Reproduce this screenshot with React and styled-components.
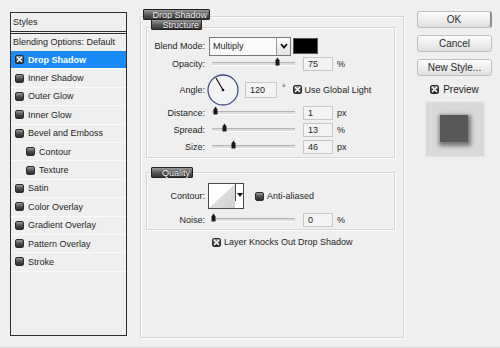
import React from 'react'
import styled, { createGlobalStyle } from 'styled-components'

const GlobalStyle = createGlobalStyle`
  html, body { margin: 0; padding: 0; background: #efefef; }
  body {
    font-family: "Liberation Sans", Arial, sans-serif;
    font-size: 9px;
    color: #1e1e1e;
  }
`

const styleItems = [
  { name: 'Drop Shadow', checked: true, active: true },
  { name: 'Inner Shadow' },
  { name: 'Outer Glow' },
  { name: 'Inner Glow' },
  { name: 'Bevel and Emboss' },
  { name: 'Contour', indent: true },
  { name: 'Texture', indent: true },
  { name: 'Satin' },
  { name: 'Color Overlay' },
  { name: 'Gradient Overlay' },
  { name: 'Pattern Overlay' },
  { name: 'Stroke' },
]

function Check({ checked }) {
  return (
    <CheckBox>
      {checked && (
        <svg width="7" height="7" viewBox="0 0 7 7">
          <path d="M1 1 L6 6 M6 1 L1 6" stroke="#fff" strokeWidth="1.4" />
        </svg>
      )}
    </CheckBox>
  )
}

function Slider({ pos }) {
  return (
    <Track>
      <Thumb style={{ left: pos }}>
        <svg width="5" height="9" viewBox="0 0 5 9">
          <path d="M0.5 3.5 L2.5 0.5 L4.5 3.5 V8.5 H0.5 Z" fill="#1a1a1a" />
        </svg>
      </Thumb>
    </Track>
  )
}

function SliderRow({ label, value, unit, pos, h = 14, top = 0 }) {
  return (
    <Row h={h} top={top}>
      <Label>{label}</Label>
      <Slider pos={pos} />
      <Field>{value}</Field>
      <Unit>{unit}</Unit>
    </Row>
  )
}

export default function App() {
  return (
    <>
      <GlobalStyle />
      <Dialog>
        <StylesPanel>
          <StylesHead>Styles</StylesHead>
          <BlendRow>Blending Options: Default</BlendRow>
          {styleItems.map((it) => (
            <ListRow key={it.name} active={it.active} indent={it.indent}>
              <Check checked={it.checked} />
              <span>{it.name}</span>
            </ListRow>
          ))}
        </StylesPanel>

        <Middle>
          <Group>
            <Tab left={2} top={-8} w={67}>Drop Shadow</Tab>
            <SubBox top={10} h={131}>
              <Tab left={4} top={-9} w={51}>Structure</Tab>
              <Row h={20} top={8}>
                <Label>Blend Mode:</Label>
                <Select>
                  <span>Multiply</span>
                  <SelectArrow>
                    <svg width="8" height="6" viewBox="0 0 8 6">
                      <path d="M1 1 L4 4.5 L7 1" stroke="#111" strokeWidth="1.8" fill="none" />
                    </svg>
                  </SelectArrow>
                </Select>
                <Swatch />
              </Row>
              <SliderRow label="Opacity:" value="75" unit="%" pos={63} top={1} />
              <Row h={31} top={3}>
                <Label>Angle:</Label>
                <Dial>
                  <svg width="32" height="32" viewBox="0 0 32 32">
                    <circle cx="16" cy="16" r="15" fill="#f3f3f3" stroke="#3d4f82" strokeWidth="1.3" />
                    <path d="M16 16 L9 4" stroke="#111" strokeWidth="1.2" />
                    <circle cx="16" cy="16" r="1.3" fill="#111" />
                  </svg>
                </Dial>
                <Field w={32} h={16} gap={6}>120</Field>
                <Unit gap={5}>°</Unit>
                <CheckLabel gap={7}>
                  <Check checked />
                  <span>Use Global Light</span>
                </CheckLabel>
              </Row>
              <SliderRow label="Distance:" value="1" unit="px" pos={1} top={1} />
              <SliderRow label="Spread:" value="13" unit="%" pos={10} top={3} />
              <SliderRow label="Size:" value="46" unit="px" pos={19} top={3} />
            </SubBox>

            <SubBox top={14} h={58}>
              <Tab left={4} top={-6} w={42}>Quality</Tab>
              <Row h={26} top={10}>
                <Label>Contour:</Label>
                <ContourBox>
                  <svg width="26" height="24" viewBox="0 0 26 24">
                    <defs>
                      <linearGradient id="cg" x1="0" y1="0" x2="1" y2="1">
                        <stop offset="0" stopColor="#e9e9e9" />
                        <stop offset="1" stopColor="#cfcfcf" />
                      </linearGradient>
                    </defs>
                    <path d="M0 24 L26 0 L26 24 Z" fill="url(#cg)" />
                  </svg>
                  <ContourArrow>
                    <svg width="6" height="4" viewBox="0 0 6 4">
                      <path d="M0 0 H6 L3 4 Z" fill="#111" />
                    </svg>
                  </ContourArrow>
                </ContourBox>
                <CheckLabel gap={11}>
                  <Check />
                  <span>Anti-aliased</span>
                </CheckLabel>
              </Row>
              <SliderRow label="Noise:" value="0" unit="%" pos={-1} h={15} top={3} />
            </SubBox>

            <KnockRow>
              <Check checked />
              <span>Layer Knocks Out Drop Shadow</span>
            </KnockRow>
          </Group>
        </Middle>

        <Side>
          <Button primary>OK</Button>
          <Button>Cancel</Button>
          <Button>New Style...</Button>
          <PreviewLabel>
            <Check checked />
            <span>Preview</span>
          </PreviewLabel>
          <PreviewBox>
            <PreviewSquare />
          </PreviewBox>
        </Side>
      </Dialog>
    </>
  )
}

const Dialog = styled.div`
  width: 500px;
  height: 348px;
  box-sizing: border-box;
  display: flex;
  align-items: flex-start;
  padding: 9px 0 0 10px;
  background: #efefef;
  border-bottom: 1px solid #d6d6d6;
`

const StylesPanel = styled.div`
  width: 117px;
  height: 324px;
  margin-top: 3px;
  box-sizing: border-box;
  border: 1px solid #2e2e2e;
  background: #efefef;
`

const StylesHead = styled.div`
  height: 18px;
  line-height: 18px;
  padding-left: 2px;
  border-bottom: 3px double #2e2e2e;
`

const BlendRow = styled.div`
  height: 17px;
  line-height: 17px;
  padding-left: 2px;
  white-space: nowrap;
`

const ListRow = styled.div`
  height: 18.4px;
  box-sizing: border-box;
  display: flex;
  align-items: center;
  gap: 4px;
  padding-left: ${(p) => (p.indent ? '15px' : '4px')};
  border-bottom: 1px solid #fafafa;
  background: ${(p) => (p.active ? '#1a8bf6' : 'transparent')};
  color: ${(p) => (p.active ? '#fff' : '#1e1e1e')};
  font-weight: ${(p) => (p.active ? 'bold' : 'normal')};
`

const CheckBox = styled.span`
  width: 9px;
  height: 9px;
  box-sizing: border-box;
  flex: none;
  display: inline-flex;
  align-items: center;
  justify-content: center;
  border: 1px solid #2b2b2b;
  border-radius: 2px;
  background: linear-gradient(#9a9a9a, #4a4a4a 55%, #2e2e2e);
`

const Middle = styled.div`
  width: 264px;
  margin-left: 13px;
`

const Group = styled.div`
  position: relative;
  height: 322px;
  margin-top: 7px;
  box-sizing: border-box;
  padding: 0 8px 0 5px;
  border: 1px solid #d4d4d4;
  box-shadow: inset 1px 1px 0 #fbfbfb, 1px 1px 0 #fbfbfb;
`

const Tab = styled.div`
  position: absolute;
  left: ${(p) => p.left}px;
  top: ${(p) => p.top}px;
  width: ${(p) => p.w}px;
  height: 11px;
  box-sizing: border-box;
  border: 1px solid #222;
  border-radius: 1px;
  background: linear-gradient(#9a9a9a, #5c5c5c 50%, #363636);
  color: #fff;
  font-size: 9px;
  line-height: 10px;
  text-align: right;
  padding-right: 2px;
  text-shadow: 0 0 1px #000;
`

const SubBox = styled.div`
  position: relative;
  height: ${(p) => p.h}px;
  margin-top: ${(p) => p.top}px;
  box-sizing: border-box;
  border: 1px solid #d6d6d6;
  box-shadow: inset 1px 1px 0 #fbfbfb, 1px 1px 0 #fbfbfb;
`

const Row = styled.div`
  display: flex;
  align-items: center;
  height: ${(p) => p.h}px;
  margin-top: ${(p) => p.top}px;
  white-space: nowrap;
`

const Label = styled.div`
  width: 58px;
  flex: none;
  text-align: right;
`

const Select = styled.div`
  width: 82px;
  height: 19px;
  margin-left: 4px;
  box-sizing: border-box;
  display: flex;
  align-items: center;
  justify-content: space-between;
  border: 1px solid #7a7a7a;
  background: #fafafa;
  padding-left: 3px;
`

const SelectArrow = styled.div`
  width: 13px;
  height: 100%;
  display: flex;
  align-items: center;
  justify-content: center;
  border-left: 1px solid #9a9a9a;
  background: linear-gradient(#fdfdfd, #e4e4e4);
`

const Swatch = styled.div`
  width: 25px;
  height: 16px;
  margin-left: 2px;
  box-sizing: border-box;
  border: 1px solid #555;
  background: #000;
`

const Track = styled.div`
  position: relative;
  width: 83px;
  height: 2px;
  margin-left: 7px;
  border-top: 1px solid #b4b4b4;
  border-bottom: 1px solid #fbfbfb;
  background: #dcdcdc;
`

const Thumb = styled.div`
  position: absolute;
  top: -6px;
  line-height: 0;
`

const Field = styled.div`
  width: ${(p) => p.w || 30}px;
  height: ${(p) => p.h || 14}px;
  margin-left: ${(p) => (p.gap !== undefined ? p.gap : 8)}px;
  box-sizing: border-box;
  border: 1px solid #c6c6c6;
  background: #f3f3f3;
  padding-left: 4px;
  display: flex;
  align-items: center;
`

const Unit = styled.div`
  margin-left: ${(p) => (p.gap !== undefined ? p.gap : 4)}px;
  margin-bottom: ${(p) => (p.gap !== undefined ? '4px' : '0')};
`

const Dial = styled.div`
  width: 32px;
  height: 32px;
  margin-left: 2px;
  line-height: 0;
`

const CheckLabel = styled.div`
  display: flex;
  align-items: center;
  gap: 3px;
  margin-left: ${(p) => p.gap}px;
`

const ContourBox = styled.div`
  position: relative;
  width: 36px;
  height: 26px;
  margin-left: 3px;
  box-sizing: border-box;
  display: flex;
  border: 1px solid #4a4a4a;
  background: #fff;
  line-height: 0;
`

const ContourArrow = styled.div`
  flex: 1;
  display: flex;
  justify-content: center;
  padding-top: 9px;
  border-left: 1px solid #4a4a4a;
  height: 8px;
`

const KnockRow = styled.div`
  display: flex;
  align-items: center;
  gap: 3px;
  margin: 6px 0 0 66px;
  height: 12px;
  white-space: nowrap;
`

const Side = styled.div`
  width: 75px;
  margin-left: 13px;
  margin-top: 2px;
  display: flex;
  flex-direction: column;
  align-items: center;
`

const Button = styled.div`
  width: 75px;
  height: 17px;
  margin-bottom: 7px;
  box-sizing: border-box;
  display: flex;
  align-items: center;
  justify-content: center;
  border: 1px solid #bdbdbd;
  border-right-color: ${(p) => (p.primary ? '#8c8c8c' : '#bdbdbd')};
  border-right-width: ${(p) => (p.primary ? '2px' : '1px')};
  border-radius: 3px;
  background: linear-gradient(#fdfdfd, #ececec 60%, #dedede);
  font-size: 10px;
  color: #2a2a2a;
`

const PreviewLabel = styled.div`
  display: flex;
  align-items: center;
  gap: 4px;
  font-size: 10px;
  margin-top: 1px;
`

const PreviewBox = styled.div`
  width: 58px;
  height: 54px;
  margin-top: 6px;
  display: flex;
  align-items: center;
  justify-content: center;
  background: #d9d9d9;
  border: 1px solid #e6e6e6;
`

const PreviewSquare = styled.div`
  width: 28px;
  height: 27px;
  margin: 0 1px 2px 0;
  background: #585858;
  box-shadow: 1px 2px 4px 2px rgba(0, 0, 0, 0.45);
`
